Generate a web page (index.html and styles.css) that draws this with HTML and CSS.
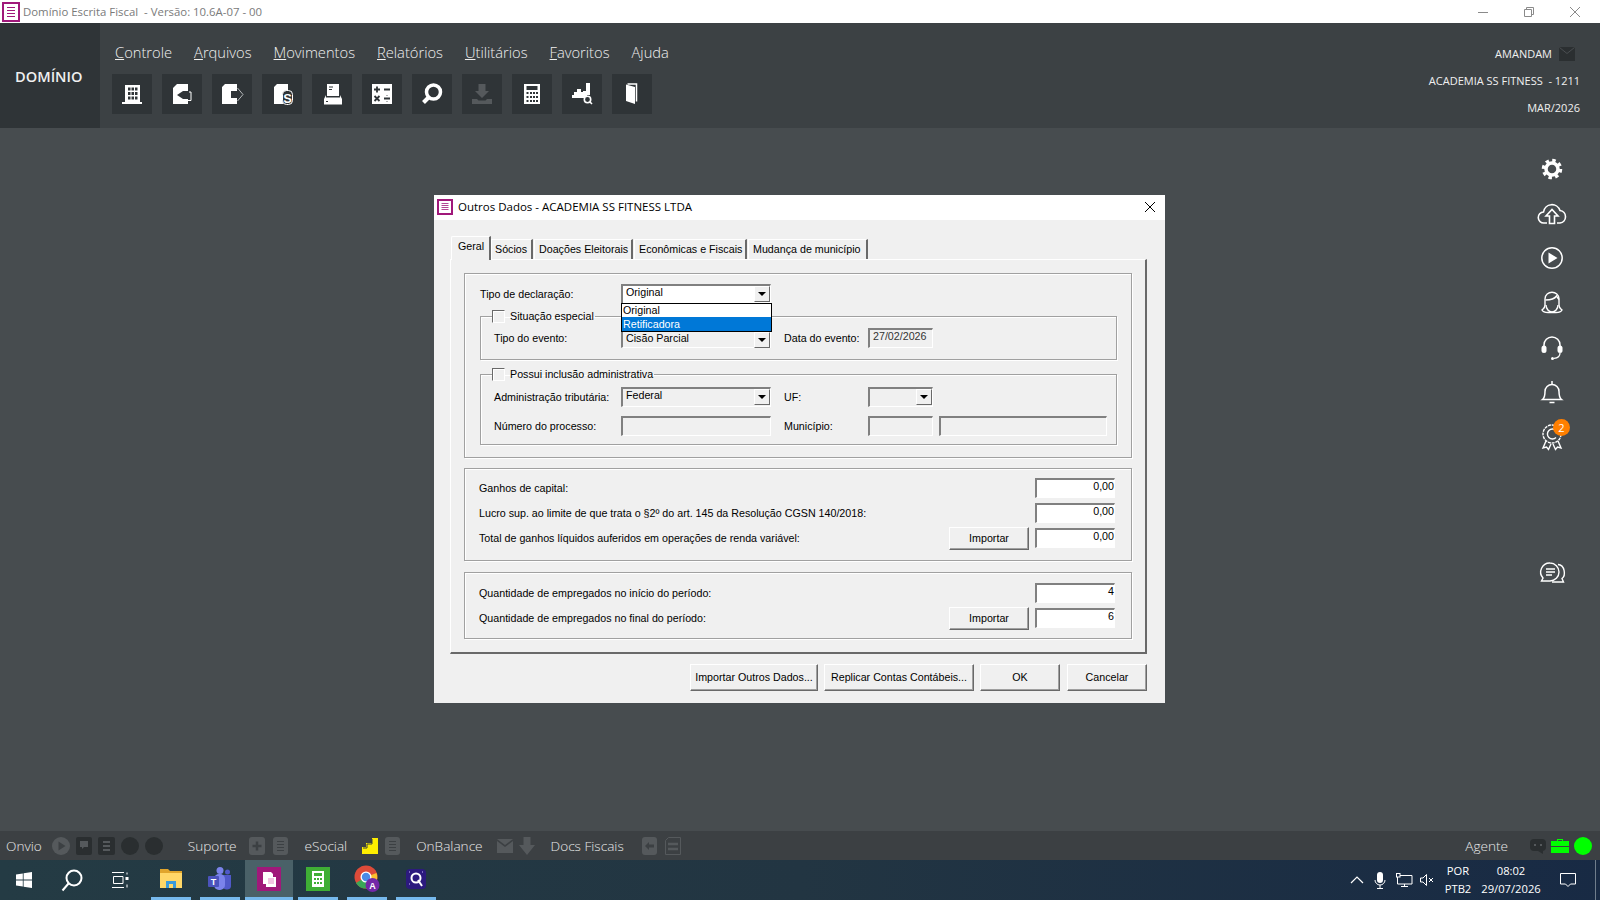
FILE: index.html
```html
<!DOCTYPE html>
<html lang="pt-BR">
<head>
    <meta charset="UTF-8">
    <title>Domínio Escrita Fiscal</title>
    <link rel="stylesheet" href="styles.css">
</head>
<body>
    <div class="titlebar">
        <svg class="app-icon" width="18" height="20" viewBox="0 0 18 20"><rect x="1" y="1" width="16" height="18" fill="#fff" stroke="#a0187a" stroke-width="2"/><path d="M5 5.500h8M5 8.500h8M5 11.500h8M5 14.500h8" stroke="#a0187a"/></svg>
        <span class="titlebar-text">Domínio Escrita Fiscal &nbsp;- Versão: 10.6A-07 - 00</span>
        <div class="window-controls">
            <svg width="12" height="12" viewBox="0 0 12 12"><path d="M1 6.500h10" stroke="#8a8a8a"/></svg>
            <svg width="12" height="12" viewBox="0 0 12 12"><path d="M1.500 3.500h7v7h-7zM3.500 3.500v-2h7v7h-2" fill="none" stroke="#8a8a8a"/></svg>
            <svg width="12" height="12" viewBox="0 0 12 12"><path d="M1 1l10 10M11 1L1 11" stroke="#8a8a8a"/></svg>
        </div>
    </div>

    <header class="app-header">
        <div class="logo">DOMÍNIO</div>
        <div class="header-main">
            <nav class="menu">
                <a><u>C</u>ontrole</a>
                <a><u>A</u>rquivos</a>
                <a><u>M</u>ovimentos</a>
                <a><u>R</u>elatórios</a>
                <a><u>U</u>tilitários</a>
                <a><u>F</u>avoritos</a>
                <a>Ajuda</a>
            </nav>
            <div class="toolbar">
                <div class="tool"><svg viewBox="0 0 40 40"><path fill="#fff" fill-rule="evenodd" d="M13 11h15v17h2v2H10v-2h3zM16 13.500v3h2.500v-3zM19.500 13.500v3H22v-3zM23 13.500v3h2.500v-3zM16 18v3h2.500v-3zM19.500 18v3H22v-3zM23 18v3h2.500v-3zM16 22.500v3h2.500v-3zM19.500 22.500v3H22v-3zM23 22.500v3h2.500v-3z"/></svg></div>
                <div class="tool"><svg viewBox="0 0 40 40"><path fill="#fff" d="M15 10h11v7h-5l-6 4 6 4h5v5H11V14z"/><path d="M27 18h2v8.500h-7" fill="none" stroke="#fff"/></svg></div>
                <div class="tool"><svg viewBox="0 0 40 40"><path fill="#fff" d="M13 10h12v7h-6v7h6v6H10V13z"/><path d="M25.500 14l5.500 6.500-5.500 6.500" fill="none" stroke="#b5b8ba"/></svg></div>
                <div class="tool"><svg viewBox="0 0 40 40"><path fill="#fff" d="M15 10h11v10h-5v10h-9V13z"/><rect x="20.500" y="16.500" width="10" height="14" rx="4" fill="#2f3437" stroke="#fff"/><text x="25.500" y="28.500" class="tool-glyph">S</text></svg></div>
                <div class="tool"><svg viewBox="0 0 40 40"><path fill="#fff" d="M15 10h12v12H15z"/><path d="M17 13h4M17 15.500h3" stroke="#2f3437"/><path fill="#fff" d="M14 21v2.500h14V21l2 4v5.500H12V25z"/><path d="M14 27.500h2" stroke="#2f3437"/></svg></div>
                <div class="tool"><svg viewBox="0 0 40 40"><rect x="10" y="10" width="20" height="20" fill="#fff"/><path d="M12 15.500h6M15 12.500v6M22 15.500h6M12.500 22l5 5M17.500 22l-5 5M22 24.500h6" stroke="#2f3437" stroke-width="1.800"/><path d="M25 21.500v.5M25 27v.5" stroke="#2f3437" stroke-width="1.500"/></svg></div>
                <div class="tool"><svg viewBox="0 0 40 40"><circle cx="21.500" cy="18" r="7" fill="none" stroke="#fff" stroke-width="3.500"/><path d="M16.500 23.500L11.500 28.500" stroke="#fff" stroke-width="4"/></svg></div>
                <div class="tool"><svg viewBox="0 0 40 40"><path fill="#55595c" d="M16.500 10h7v7H27l-7 7-7-7h3.500zM10 25h5l1.500 1.500h7L25 25h5v5H10z"/></svg></div>
                <div class="tool"><svg viewBox="0 0 40 40"><path fill="#fff" fill-rule="evenodd" d="M12 10h16v20H12zM14.500 12v4h11v-4zM14.500 18v2h2v-2zM18 18v2h2v-2zM21 18v2h2v-2zM24 18v2h2v-2zM14.500 22v2h2v-2zM18 22v2h2v-2zM21 22v2h2v-2zM24 22v2h2v-2zM14.500 26v2h2v-2zM18 26v2h2v-2zM21 26v2h2v-2zM24 26v2h2v-2z"/></svg></div>
                <div class="tool"><svg viewBox="0 0 40 40"><path fill="#fff" d="M24 9h4v12h-3v3H10v-3h2v-3h3v-3h4v3h2v-1h3z"/><circle cx="25.500" cy="25.500" r="3.200" fill="#2f3437" stroke="#fff" stroke-width="1.600"/><path d="M28 28l2 2" stroke="#fff" stroke-width="1.600"/></svg></div>
                <div class="tool"><svg viewBox="0 0 40 40"><path fill="#fff" d="M14 10.500l9 2.500v17l-9-3z"/><path d="M15.500 10h9v17.500" fill="none" stroke="#fff" stroke-width="1.500"/></svg></div>
            </div>
        </div>
        <div class="header-info">
            <div class="info-row">AMANDAM <svg class="mail" width="16" height="14" viewBox="0 0 16 14"><rect width="16" height="14" fill="#2b2f31"/><path d="M.5.500L8 6.500 15.500.500" fill="none" stroke="#4a4e51"/></svg></div>
            <div class="info-row">ACADEMIA SS FITNESS &nbsp;- 1211</div>
            <div class="info-row">MAR/2026</div>
        </div>
    </header>

    <main class="desktop">
        <aside class="side-rail">
            <div class="rail-icon"><svg viewBox="0 0 30 30"><circle cx="15" cy="15" r="6" fill="none" stroke="#fff" stroke-width="3.500"/><circle cx="15" cy="15" r="8.500" fill="none" stroke="#fff" stroke-width="3.500" stroke-dasharray="3.400 3.270"/></svg></div>
            <div class="rail-icon"><svg viewBox="0 0 30 30"><path d="M10 24H7a5.500 5.500 0 0 1-.5-11A8.500 8.500 0 0 1 23 11.500a6.300 6.300 0 0 1 0 12.500h-3" fill="none" stroke="#fff" stroke-width="1.600"/><path d="M12.500 24.500V17H9l6-6.500 6 6.500h-3.500v7.500z" fill="none" stroke="#fff" stroke-width="1.600"/></svg></div>
            <div class="rail-icon"><svg viewBox="0 0 30 30"><circle cx="15" cy="15" r="10.200" fill="none" stroke="#fff" stroke-width="1.500"/><path d="M11.500 9.500l9 5.500-9 5.500z" fill="#fff"/></svg></div>
            <div class="rail-icon"><svg viewBox="0 0 30 30" fill="none" stroke="#fff" stroke-width="1.400"><path d="M8 17v-6c0-9 14-9 14 0v6c0 3 2 4 3 5-1 2-4 2.500-6 2.500h-8c-2 0-5-.5-6-2.500 1-1 3-2 3-5z"/><path d="M8.500 12c4 0 9-1 11-4 1 2 2 3 2.500 3.500M9 17c0 4 3 7 6 7s6-3 6-7"/></svg></div>
            <div class="rail-icon"><svg viewBox="0 0 30 30"><path d="M7 16v-4a8 8 0 0 1 16 0v4" fill="none" stroke="#fff" stroke-width="1.500"/><rect x="4.500" y="12.500" width="5" height="7.500" rx="2.500" fill="#fff"/><rect x="20.500" y="12.500" width="5" height="7.500" rx="2.500" fill="#fff"/><path d="M23 20c0 3-2 5-6 5.300" fill="none" stroke="#fff" stroke-width="1.300"/><circle cx="15.500" cy="25.500" r="1.500" fill="#fff"/></svg></div>
            <div class="rail-icon"><svg viewBox="0 0 30 30"><path d="M5.500 22.500c2-1.500 2.500-3 2.500-8a7 7 0 0 1 14 0c0 5 .5 6.500 2.500 8z" fill="none" stroke="#fff" stroke-width="1.500"/><path d="M15 4v3.500M12.500 25.500h5" stroke="#fff" stroke-width="1.500"/></svg></div>
            <div class="rail-icon has-badge">
                <svg viewBox="0 0 30 30" fill="none" stroke="#fff" stroke-width="1.400"><circle cx="15" cy="12" r="9" stroke-dasharray="3 .8"/><path d="M19 8.500a5 5 0 1 0 0 7"/><path d="M9 19l-3 7 3.500-1 2 2.500 2.500-5.500M21 19l3 7-3.500-1-2 2.500-2.500-5.500"/></svg>
                <span class="badge">2</span>
            </div>
            <div class="rail-icon rail-chat"><svg viewBox="0 0 30 30" fill="none" stroke="#fff" stroke-width="1.400"><path d="M13 5a9 9 0 0 1 0 18H4.500l1.500-3A9 9 0 0 1 13 5z"/><path d="M21 6.500c7 .5 8 11 4 14l1.500 3.500H15"/><path d="M9 11h9M9 14h9M9 17h6" stroke-width="1.300"/></svg></div>
        </aside>

        <section class="dialog">
            <div class="dialog-title">
                <svg class="app-icon" width="16" height="16" viewBox="0 0 16 16"><rect x="1" y="1" width="14" height="14" fill="#fff" stroke="#a0187a" stroke-width="2"/><path d="M4.500 4.500h7M4.500 6.500h7M4.500 8.500h7M4.500 10.500h7" stroke="#a0187a" stroke-opacity=".8"/></svg>
                <span class="dialog-title-text">Outros Dados - ACADEMIA SS FITNESS LTDA</span>
                <svg class="dialog-close" width="12" height="12" viewBox="0 0 12 12"><path d="M1 1l10 10M11 1L1 11" stroke="#000"/></svg>
            </div>
            <div class="dialog-body">
                <div class="tabs">
                    <div class="tab tab-active">Geral</div>
                    <div class="tab tab-socios">Sócios</div>
                    <div class="tab tab-doacoes">Doações Eleitorais</div>
                    <div class="tab tab-economicas">Econômicas e Fiscais</div>
                    <div class="tab tab-mudanca">Mudança de município</div>
                </div>
                <div class="tab-panel">
                    <div class="group group-main">
                        <div class="type-row">
                            <label class="type-label">Tipo de declaração:</label>
                            <div class="combo combo-white">
                                <span>Original</span>
                                <span class="combo-btn"></span>
                                <ul class="combo-list">
                                    <li>Original</li>
                                    <li class="selected">Retificadora</li>
                                </ul>
                            </div>
                        </div>
                        <fieldset class="frame frame-event">
                            <legend><span class="check"></span>Situação especial</legend>
                            <div class="form-grid">
                                <label>Tipo do evento:</label>
                                <div class="combo combo-short"><span>Cisão Parcial</span><span class="combo-btn"></span></div>
                                <label class="label-right">Data do evento:</label>
                                <div class="field field-date">27/02/2026</div>
                            </div>
                        </fieldset>
                        <fieldset class="frame frame-admin">
                            <legend><span class="check"></span>Possui inclusão administrativa</legend>
                            <div class="form-grid">
                                <label>Administração tributária:</label>
                                <div class="combo"><span>Federal</span><span class="combo-btn"></span></div>
                                <label class="label-right">UF:</label>
                                <div class="combo"><span></span><span class="combo-btn"></span></div>
                                <span></span>
                                <label>Número do processo:</label>
                                <div class="field"></div>
                                <label class="label-right">Município:</label>
                                <div class="field"></div>
                                <div class="field field-city"></div>
                            </div>
                        </fieldset>
                    </div>

                    <div class="group group-capital">
                        <div class="value-grid">
                            <label>Ganhos de capital:</label>
                            <div class="field field-value">0,00</div>
                            <label>Lucro sup. ao limite de que trata o §2º do art. 145 da Resolução CGSN 140/2018:</label>
                            <div class="field field-value">0,00</div>
                            <label>Total de ganhos líquidos auferidos em operações de renda variável:</label>
                            <button class="btn btn-import">Importar</button>
                            <div class="field field-value">0,00</div>
                        </div>
                    </div>

                    <div class="group group-staff">
                        <div class="value-grid">
                            <label>Quantidade de empregados no início do período:</label>
                            <div class="field field-value">4</div>
                            <label>Quantidade de empregados no final do período:</label>
                            <button class="btn btn-import">Importar</button>
                            <div class="field field-value">6</div>
                        </div>
                    </div>
                </div>
                <div class="dialog-footer">
                    <button class="btn btn-outros">Importar Outros Dados...</button>
                    <button class="btn btn-replicar">Replicar Contas Contábeis...</button>
                    <button class="btn btn-ok">OK</button>
                    <button class="btn btn-ok">Cancelar</button>
                </div>
            </div>
        </section>
    </main>

    <div class="statusbar">
        <span class="status-label">Onvio</span>
        <div class="st-group st-onvio">
            <svg width="18" height="18" viewBox="0 0 18 18"><circle cx="9" cy="9" r="9" fill="#55595c"/><path d="M6.500 4.500l7 4.500-7 4.500z" fill="#3c4043"/></svg>
            <svg width="16" height="18" viewBox="0 0 16 18"><rect width="16" height="18" rx="2" fill="#2a2e30"/><path d="M4 4h8v6H8l-2 2v-2H4z" fill="#55595c"/></svg>
            <svg width="17" height="18" viewBox="0 0 17 18"><rect width="17" height="18" rx="2" fill="#2a2e30"/><path d="M5 5h7M5 9h7M5 13h7" stroke="#55595c" stroke-width="2"/></svg>
            <svg width="18" height="18" viewBox="0 0 18 18"><circle cx="9" cy="9" r="9" fill="#2a2e30"/></svg>
            <svg width="18" height="18" viewBox="0 0 18 18"><circle cx="9" cy="9" r="9" fill="#2a2e30"/></svg>
        </div>
        <span class="status-label status-suporte">Suporte</span>
        <div class="st-group st-suporte">
            <svg width="16" height="18" viewBox="0 0 16 18"><rect width="16" height="18" rx="3" fill="#55595c"/><path d="M3.500 9h9M8 4.500v9" stroke="#3c4043" stroke-width="2.500"/></svg>
            <svg width="15" height="18" viewBox="0 0 15 18"><rect width="15" height="18" rx="3" fill="#55595c"/><path d="M4 4.500h7M4 7.500h7M4 10.500h7M4 13.500h7" stroke="#3c4043"/></svg>
        </div>
        <span class="status-label status-esocial">eSocial</span>
        <div class="st-group st-esocial">
            <svg width="16" height="16" viewBox="0 0 16 16"><path fill="#ffee00" d="M10 0h6v16H0V9h4V5h6z"/><path d="M10 1v5H5v4H1" fill="none" stroke="#3c4043"/></svg>
            <svg width="15" height="18" viewBox="0 0 15 18"><rect width="15" height="18" rx="3" fill="#55595c"/><path d="M4 4.500h7M4 7.500h7M4 10.500h7M4 13.500h7" stroke="#3c4043"/></svg>
        </div>
        <span class="status-label status-onbalance">OnBalance</span>
        <div class="st-group st-onbalance">
            <svg width="16" height="14" viewBox="0 0 16 14"><path fill="#55595c" d="M0 0h16L8 6zM0 2l8 6 8-6v12H0z"/></svg>
            <svg width="16" height="18" viewBox="0 0 16 18"><path fill="#55595c" d="M4.500 0h7v8H16l-8 10L0 8h4.500z"/></svg>
        </div>
        <span class="status-label status-docs">Docs Fiscais</span>
        <div class="st-group st-docs">
            <svg width="15" height="18" viewBox="0 0 15 18"><rect width="15" height="18" rx="3" fill="#55595c"/><path d="M3 9l4-4v2.500h5v3H7V13z" fill="#3c4043"/></svg>
            <svg width="16" height="18" viewBox="0 0 16 18"><path d="M3.500.5h12v17H.5V3.500z" fill="none" stroke="#55595c"/><path d="M3 7h10M3 12h10" stroke="#55595c" stroke-width="2.500"/></svg>
        </div>

        <span class="status-label status-agente">Agente</span>
        <div class="st-group st-agente">
            <svg width="16" height="16" viewBox="0 0 16 16"><rect y="1" width="16" height="12" rx="4" fill="#2a2e30"/><path d="M5 6v2M11 6v2" stroke="#55595c" stroke-width="2"/><path d="M8 13h5v3z" fill="#2a2e30"/></svg>
            <svg width="18" height="14" viewBox="0 0 18 14"><path fill="#00ff00" d="M6 0h6v2h6v5H0V2h6zM7 1v1h4V1zM0 8h18v6H0z"/></svg>
            <svg width="18" height="18" viewBox="0 0 18 18"><circle cx="9" cy="9" r="9" fill="#00ff00"/></svg>
        </div>
    </div>

    <footer class="taskbar">
        <div class="task-start"><svg width="16" height="16" viewBox="0 0 16 16"><path fill="#fff" d="M0 2.400l6.800-1v6.200H0zM7.600 1.300L16 0v7.600H7.600zM0 8.400h6.800v6.200l-6.800-1zM7.600 8.400H16V16l-8.400-1.200z"/></svg></div>
        <div class="task-start"><svg width="24" height="24" viewBox="0 0 24 24" fill="none" stroke="#fff" stroke-width="2"><circle cx="14" cy="10" r="7.500"/><path d="M8.500 15.500L2.500 22.500"/></svg></div>
        <div class="task-start"><svg width="18" height="16" viewBox="0 0 18 16" fill="none" stroke="#fff"><path d="M1 .5h12M1 15.500h12M2.500 4.500h9.500v7H2.500z"/><path d="M16 .5v2M16 12.500v3" /><rect x="14.500" y="5" width="3" height="3" fill="#fff" stroke="none"/></svg></div>
        <div class="task-apps">
            <div class="task-item"><svg width="22" height="19" viewBox="0 0 22 19"><path fill="#e0a52c" d="M0 0h8l2 2h12v17H0z"/><path fill="#ffd768" d="M0 4h22v15H0z"/><path fill="#3a9bdc" d="M6 12h10v7h-3v-4H9v4H6z"/></svg></div>
            <div class="task-item"><svg width="24" height="23" viewBox="0 0 24 23"><circle cx="12" cy="3.500" r="3.500" fill="#7b83eb"/><circle cx="19.500" cy="5" r="2.500" fill="#5059c9"/><path d="M14 8h9v10a4 4 0 0 1-8 1z" fill="#5059c9"/><rect x="6" y="7" width="11" height="16" rx="5" fill="#7b83eb"/><rect y="9" width="11" height="11" rx="1" fill="#4b53bc"/><text x="5.500" y="18" class="task-glyph">T</text></svg></div>
            <div class="task-item task-active"><svg width="24" height="24" viewBox="0 0 24 24"><rect width="24" height="24" fill="#a0187a"/><path fill="#fff" d="M6 5h8l2 2v3h3v10H9v-3H6z"/><path d="M11 12h6M11 14h6M11 16h6" stroke="#e58ac7"/></svg></div>
            <div class="task-item"><svg width="24" height="24" viewBox="0 0 24 24"><rect width="24" height="24" fill="#3fae35"/><path fill="#fff" fill-rule="evenodd" d="M6 4h12v16H6zM8 6v3h8V6zM8 11v2h2v-2zM11 11v2h2v-2zM14 11v2h2v-2zM8 15v2h2v-2zM11 15v2h2v-2zM14 15v2h2v-2z"/></svg></div>
            <div class="task-item"><svg width="27" height="27" viewBox="0 0 27 27"><circle cx="12" cy="12" r="11.500" fill="#dd4b39"/><path d="M12 12L2 18a11.500 11.500 0 0 0 10 5.500z" fill="#3aa757"/><path d="M12 12l10.500-4A11.500 11.500 0 0 1 12 23.500z" fill="#fbc02d"/><circle cx="12" cy="12" r="5.500" fill="#fff"/><circle cx="12" cy="12" r="4.200" fill="#4a8be8"/><circle cx="18.500" cy="20" r="7" fill="#7327a8"/><text x="18.500" y="23.500" class="task-glyph">A</text></svg></div>
            <div class="task-item"><svg width="20" height="20" viewBox="0 0 20 20"><rect width="20" height="20" rx="4" fill="#2c1a7e"/><circle cx="10" cy="9" r="4.500" fill="none" stroke="#fff" stroke-width="2"/><path d="M12 11l4 6" stroke="#fff" stroke-width="2"/><path d="M3 3h1M16 3h1M3 15h1" stroke="#c9b8ff"/></svg></div>
        </div>
        <div class="tray">
            <svg class="tray-icon" width="14" height="8" viewBox="0 0 14 8"><path d="M1 7l6-6 6 6" fill="none" stroke="#fff" stroke-width="1.200"/></svg>
            <svg class="tray-icon" width="12" height="17" viewBox="0 0 12 17"><rect x="3" y="0" width="6" height="11" rx="3" fill="#fff"/><path d="M1 8a5 5 0 0 0 10 0M6 13v3M3 16.500h6" fill="none" stroke="#fff"/></svg>
            <svg class="tray-icon tray-net" width="17" height="14" viewBox="0 0 17 14" fill="none" stroke="#fff"><path d="M1.500 2.500H16v8.500H1.500zM8.500 11v2.500M5 13.500h7"/><rect x=".5" y=".5" width="3.500" height="3.500" fill="#1a2a45"/></svg>
            <svg class="tray-icon tray-vol" width="15" height="12" viewBox="0 0 15 12" fill="none" stroke="#fff"><path d="M.5 4h2.500L6.500.5v11L3 8H.5zM9 4l4 4M13 4L9 8"/></svg>
            <div class="tray-lang"><span>POR</span><span>PTB2</span></div>
            <div class="tray-clock"><span>08:02</span><span>29/07/2026</span></div>
            <svg class="tray-note" width="16" height="14" viewBox="0 0 16 14"><path d="M.5.500h15v10.500h-5L8 13.500 5.500 11h-5z" fill="none" stroke="#fff"/></svg>
            <span class="show-desktop"></span>
        </div>
    </footer>
</body>
</html>
```

FILE: styles.css
```css
* {
    box-sizing: border-box;
}

body {
    margin: 0;
    width: 1600px;
    height: 900px;
    overflow: hidden;
    display: flex;
    flex-direction: column;
    font-family: "Open Sans", sans-serif;
    background-color: #474c4f;
}

svg {
    display: block;
    flex: none;
}

/* window title */
.titlebar {
    height: 23px;
    background-color: #fff;
    display: flex;
    align-items: center;
    padding-left: 2px;
}

.titlebar-text {
    margin-left: 3px;
    font-size: 11.4px;
    color: #7a7a7a;
}

.window-controls {
    margin-left: auto;
    display: flex;
    gap: 34px;
    padding-right: 19px;
}

/* top header */
.app-header {
    height: 105px;
    background-color: #3c4144;
    display: flex;
    color: #f0f0f0;
}

.logo {
    width: 100px;
    background-color: #2f3437;
    padding: 43px 0 0 15px;
    font-size: 14.6px;
    font-weight: 600;
    line-height: 20px;
}

.header-main {
    padding-left: 12px;
}

.menu {
    display: flex;
    gap: 22px;
    height: 51px;
    padding: 17px 0 0 3px;
    font-size: 14.7px;
    line-height: 24px;
    font-weight: 300;
}

.toolbar {
    display: flex;
    gap: 10px;
}

.tool {
    width: 40px;
    height: 40px;
    background-color: #2f3437;
}

.tool-glyph {
    font-family: "Liberation Sans", sans-serif;
    font-size: 13px;
    font-weight: 700;
    fill: #fff;
    text-anchor: middle;
}

.header-info {
    margin-left: auto;
    padding: 17px 20px 0 0;
    font-size: 11px;
    text-align: right;
}

.info-row {
    height: 27px;
    line-height: 27px;
    display: flex;
    justify-content: flex-end;
    align-items: center;
}

.mail {
    margin: 0 5px 0 7px;
}

/* main area */
.desktop {
    flex: 1;
    position: relative;
    display: flex;
    justify-content: flex-end;
}

.side-rail {
    width: 96px;
    padding: 26px 33px 0 0;
    display: flex;
    flex-direction: column;
    align-items: flex-end;
    gap: 14.7px;
}

.rail-icon {
    width: 30px;
    height: 30px;
    position: relative;
}

.rail-chat {
    margin-top: 91px;
}

.badge {
    position: absolute;
    top: -3px;
    right: -3px;
    width: 17px;
    height: 17px;
    border-radius: 50%;
    background-color: #ff7f00;
    color: #fff;
    font-size: 11px;
    line-height: 17px;
    text-align: center;
}

/* dialog */
.dialog {
    position: absolute;
    left: 434px;
    top: 67px;
    width: 731px;
    height: 508px;
    background-color: #f0f0f0;
    font-family: "Liberation Sans", sans-serif;
    font-size: 10.7px;
    color: #000;
}

.dialog-title {
    height: 25px;
    background-color: #fff;
    display: flex;
    align-items: center;
    padding: 0 0 2px 3px;
}

.dialog-title-text {
    margin-left: 5px;
    font-family: "Open Sans", sans-serif;
    font-size: 11.5px;
}

.dialog-close {
    margin-left: auto;
    margin-right: 9px;
}

.dialog-body {
    padding: 16px 18px 0 16px;
}

.tabs {
    display: flex;
    align-items: flex-end;
    height: 23px;
    padding-left: 1px;
    white-space: nowrap;
}

.tab {
    height: 20px;
    line-height: 19px;
    padding-left: 4px;
    border-top: 1px solid #fff;
    border-left: 1px solid #fff;
    border-right: 2px solid #696969;
    margin-right: 1px;
}

.tab-active {
    width: 40px;
    height: 24px;
    padding-left: 6px;
    line-height: 19px;
    background-color: #f0f0f0;
    position: relative;
    top: 1px;
    margin-right: 0;
    border-radius: 2px 0 0 0;
    z-index: 1;
}

.tab-socios {
    width: 42px;
    padding-left: 3px;
}

.tab-doacoes {
    width: 99px;
}

.tab-economicas {
    width: 113px;
}

.tab-mudanca {
    width: 120px;
    margin-right: 0;
}

.tab-panel {
    height: 395px;
    padding: 13px 13px 0 13px;
    border-top: 1px solid #fff;
    border-left: 1px solid #fff;
    border-right: 2px solid #696969;
    border-bottom: 2px solid #696969;
}

.group,
.frame {
    border: 1px solid #a0a0a0;
    box-shadow: 1px 1px 0 #fff, inset 1px 1px 0 #fff;
}

.group-main {
    height: 185px;
    padding: 10px 14px 0 15px;
}

.group-capital {
    height: 93px;
    margin-top: 10px;
    padding: 9px 16px 0 14px;
}

.group-staff {
    height: 67px;
    margin-top: 11px;
    padding: 10px 16px 0 14px;
}

.type-row {
    display: flex;
    align-items: center;
    height: 20px;
}

.type-label {
    width: 141px;
}

.type-row .combo {
    width: 150px;
}

.frame {
    margin: 4px 0 0 0;
    padding: 4px 9px 11px 13px;
    min-width: 0;
}

.frame-admin {
    margin-top: 6px;
    padding-bottom: 8px;
}

.frame-admin .form-grid {
    padding-top: 1px;
}

.frame legend {
    margin-left: -2px;
    padding: 0 1px 0 0;
    height: 16px;
    line-height: 16px;
    display: flex;
    align-items: center;
    gap: 5px;
}

.check {
    width: 13px;
    height: 13px;
    background-color: #f0f0f0;
    border-top: 1px solid #696969;
    border-left: 1px solid #696969;
    border-right: 1px solid #fff;
    border-bottom: 1px solid #fff;
    box-shadow: inset 1px 1px 0 #fff;
}

.form-grid {
    display: grid;
    grid-template-columns: 127px 150px 97px 65px 174px;
    grid-auto-rows: 20px;
    row-gap: 9px;
    align-items: center;
}

.label-right {
    padding-left: 13px;
}

.field,
.combo {
    height: 20px;
    position: relative;
    background-color: #f0f0f0;
    border-top: 2px solid #808080;
    border-left: 2px solid #808080;
    border-right: 1px solid #fff;
    border-bottom: 1px solid #fff;
    line-height: 13px;
}

.field-date {
    padding-left: 3px;
    color: #333;
}

.field-city {
    margin-left: 6px;
    width: 168px;
}

.combo {
    padding-left: 3px;
}

.combo-short {
    height: 18px;
    margin-top: 1px;
}

.combo-white {
    background-color: #fff;
}

.combo-btn {
    position: absolute;
    top: 0;
    right: 0;
    width: 16px;
    height: 16px;
    background-color: #f0f0f0;
    border-top: 1px solid #fff;
    border-left: 1px solid #fff;
    border-right: 1px solid #696969;
    border-bottom: 1px solid #696969;
}

.combo-btn::after {
    content: "";
    position: absolute;
    left: 3px;
    top: 5px;
    border-left: 4px solid transparent;
    border-right: 4px solid transparent;
    border-top: 4px solid #000;
}

.combo-list {
    list-style: none;
    position: absolute;
    left: -2px;
    top: 17px;
    width: 151px;
    height: 29px;
    margin: 0;
    padding: 0;
    background-color: #fff;
    border: 1px solid #000;
    z-index: 5;
}

.combo-list li {
    height: 13px;
    line-height: 12px;
    padding-left: 1px;
}

.combo-list .selected {
    height: 14px;
    line-height: 14px;
    background-color: #0078d7;
    color: #fff;
}

.value-grid {
    display: grid;
    grid-template-columns: 1fr auto 80px;
    grid-auto-rows: 20px;
    row-gap: 5px;
    align-items: center;
}

.value-grid label {
    grid-column: 1;
}

.value-grid .field-value {
    grid-column: 3;
}

.field-value {
    background-color: #fff;
    text-align: right;
    line-height: 13px;
}

.btn {
    font-family: "Liberation Sans", sans-serif;
    font-size: 10.7px;
    padding: 0;
    color: #000;
    background-color: #f0f0f0;
    border: 1px solid;
    border-color: #fff #696969 #696969 #fff;
    box-shadow: inset -1px -1px 0 #a0a0a0;
}

.btn-import {
    grid-column: 2;
    width: 80px;
    height: 23px;
    margin-right: 6px;
}

.dialog-footer {
    margin-top: 10px;
    display: flex;
    justify-content: flex-end;
    gap: 6px;
}

.dialog-footer .btn {
    height: 27px;
    padding-bottom: 2px;
}

.btn-outros {
    width: 128px;
}

.btn-replicar {
    width: 150px;
}

.btn-ok {
    width: 80px;
}

.btn-ok + .btn-ok {
    margin-left: 1px;
}

/* lower status bar */
.statusbar {
    height: 29px;
    background-color: #3c4043;
    display: flex;
    align-items: center;
    padding: 0 8px 0 6px;
    color: #e8e8e8;
}

.status-label {
    font-size: 13.6px;
    font-weight: 300;
}

.st-group {
    display: flex;
    align-items: center;
    gap: 6px;
}

.st-onvio {
    margin-left: 10px;
}

.status-suporte {
    margin-left: 25px;
}

.st-suporte {
    margin-left: 12px;
    gap: 8px;
}

.status-esocial {
    margin-left: 17px;
}

.st-esocial {
    margin-left: 15px;
    gap: 7px;
}

.status-onbalance {
    margin-left: 16px;
}

.st-onbalance {
    margin-left: 14px;
}

.status-docs {
    margin-left: 16px;
}

.st-docs {
    margin-left: 18px;
    gap: 8px;
}

.status-agente {
    margin-left: auto;
    margin-right: 22px;
}

.st-agente {
    gap: 5px;
}

/* windows taskbar */
.taskbar {
    height: 40px;
    background: linear-gradient(90deg, #243b44 0%, #223542 50%, #182a44 100%);
    display: flex;
    color: #fff;
}

.task-start {
    width: 48px;
    display: flex;
    align-items: center;
    justify-content: center;
}

.task-apps {
    display: flex;
    gap: 9px;
    margin-left: 7px;
}

.task-item {
    width: 40px;
    height: 40px;
    display: flex;
    align-items: center;
    justify-content: center;
    border-bottom: 3px solid #76b9ed;
}

.task-active {
    width: 48px;
    margin: 0 -4px;
    background-color: #4a6168;
}

.task-glyph {
    font-family: "Liberation Sans", sans-serif;
    font-size: 9px;
    font-weight: 700;
    fill: #fff;
    text-anchor: middle;
}

.tray {
    margin-left: auto;
    display: flex;
    align-items: center;
    font-size: 11.2px;
}

.tray-icon {
    margin-right: 10px;
}

.tray-net {
    margin-right: 7px;
}

.tray-vol {
    margin-right: 5px;
}

.tray-lang,
.tray-clock {
    display: flex;
    flex-direction: column;
    align-items: center;
    line-height: 18px;
}

.tray-lang {
    width: 36px;
}

.tray-clock {
    width: 64px;
    margin-left: 3px;
}

.tray-note {
    margin-left: 17px;
    margin-right: 19px;
}

.show-desktop {
    width: 1px;
    height: 40px;
    background-color: #6f7d8c;
    margin-right: 4px;
}
```
